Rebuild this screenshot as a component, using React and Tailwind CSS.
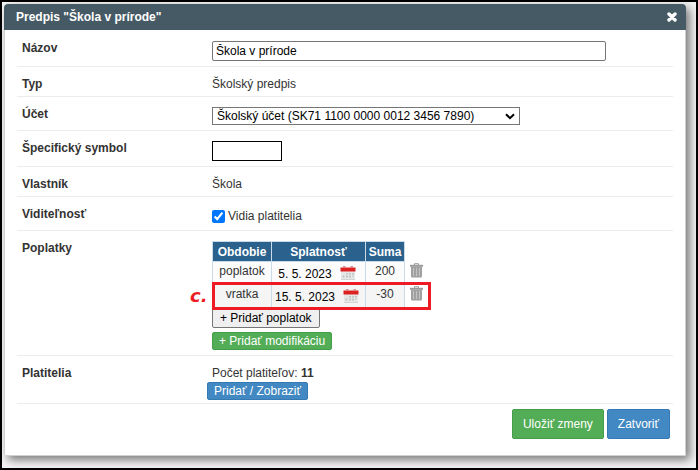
import React, { useState } from 'react';

const FEES = [
    { id: 1, period: 'poplatok', due: '5. 5. 2023',  amount: '200' },
    { id: 2, period: 'vratka',   due: '15. 5. 2023', amount: '-30' },
];

// ── Icons ────────────────────────────────────────────────────────
function CloseIcon() {
    return (
        <svg width="10" height="10" viewBox="0 0 10 10" stroke="#fff" strokeWidth="3.4" strokeLinecap="round">
            <path d="M2 2l6 6M8 2l-6 6" />
        </svg>
    );
}

function CalendarIcon() {
    return (
        <svg width="16" height="16" viewBox="0 0 16 16">
            <path d="M1 6h14v8H1z" fill="#e6e8e8" />
            <path d="M1 14h14v1H1z" fill="#d4d4d4" />
            <path d="M0.5 2.500h15v4h-15z" fill="#dd2222" />
            <path d="M3 1h2.500v2H3zM10.500 1H13v2h-2.500z" fill="#d98c8c" />
            <path
                d="M6 8h2v1.500H6zM9 8h2v1.500H9zM12 8h2v1.500h-2zM2.500 10.500h2v2h-2zM6 10.500h2v2H6zM9 10.500h2v2H9zM12 10.500h2v1h-2z"
                fill="#c2c6c6"
            />
        </svg>
    );
}

function TrashIcon() {
    return (
        <svg width="13" height="15" viewBox="0 0 13 15">
            <path d="M4.500 2V.7h4V2" fill="none" stroke="#9a9a9a" strokeWidth="1" />
            <path d="M0 1.800h13v2H0z" fill="#999" />
            <path d="M1 4h11v9.500q0 1-1 1H2q-1 0-1-1z" fill="#a0a0a0" />
            <path d="M3.500 5v8M6.500 5v8M9.500 5v8" stroke="#c4c4c4" strokeWidth="1" />
        </svg>
    );
}

// ── One label / value line of the form ───────────────────────────
function Row({ label, htmlFor, field, children }) {
    return (
        <div className="flex border-b border-[#ececec]">
            <div className="w-[195px] shrink-0 pt-2 pb-[3px] pl-[5px] font-bold">
                {htmlFor ? <label htmlFor={htmlFor}>{label}</label> : label}
            </div>
            <div className={`min-w-0 flex-1 ${field ? 'pt-[10px] pb-[5px]' : 'pt-2 pb-[3px]'}`}>
                {children}
            </div>
        </div>
    );
}

function FeeTable() {
    return (
        <div className="relative w-[219px]">
            <table className="w-full table-fixed border-collapse text-center">
                <colgroup>
                    <col className="w-[59px]" />
                    <col className="w-[94px]" />
                    <col className="w-[39px]" />
                    <col />
                </colgroup>
                <thead>
                    <tr className="h-5 text-white">
                        <th className="border border-[#c9dbe8] bg-[#2a618d] p-0">Obdobie</th>
                        <th className="border border-[#c9dbe8] bg-[#2a618d] p-0">Splatnosť</th>
                        <th className="border border-[#c9dbe8] bg-[#2a618d] p-0">Suma</th>
                        <td />
                    </tr>
                </thead>
                <tbody>
                    {FEES.map((fee) => (
                        <tr key={fee.id} className="h-[23px] bg-[#fcfcfc] even:bg-[#f5f5f5]">
                            <td className="border border-[#c9dbe8] p-0 align-top">{fee.period}</td>
                            <td className="border border-[#c9dbe8] p-0">
                                <div className="flex h-[22px] items-center justify-center gap-2 pr-[3px] text-black">
                                    <span className="pt-[2px] whitespace-nowrap">{fee.due}</span>
                                    <button type="button" aria-label="Vybrať dátum">
                                        <CalendarIcon />
                                    </button>
                                </div>
                            </td>
                            <td className="border border-[#c9dbe8] p-0 align-top">{fee.amount}</td>
                            <td className="bg-white p-0 pl-1 align-top">
                                <button type="button" aria-label="Odstrániť" className="block pt-px pl-px">
                                    <TrashIcon />
                                </button>
                            </td>
                        </tr>
                    ))}
                </tbody>
            </table>

            {/* ── Highlight around the refund line ── */}
            <div className="pointer-events-none absolute right-0 -bottom-[2px] left-0 h-7 border-3 border-[#ed1c24]" />
            <span className="absolute bottom-[3px] -left-[22px] font-['DejaVu_Sans',sans-serif] text-lg leading-[18px] font-bold text-[#ed1c24] italic">
                c.
            </span>
        </div>
    );
}

export default function App() {
    const [name, setName]       = useState('Škola v prírode');
    const [symbol, setSymbol]   = useState('');
    const [visible, setVisible] = useState(true);

    return (
        <div className="flex min-h-screen flex-col border-2 border-black bg-[#f4f4f4] pt-[2px] pr-[10px] pb-3 pl-[2px] font-['Liberation_Sans',Arial,sans-serif] text-xs leading-[18px] text-[#333]">
            <div className="flex flex-1 flex-col rounded-t-[4px] rounded-b-[2px] bg-white shadow-[4px_4px_10px_rgba(0,0,0,0.5)]">
                {/* ── Title bar ── */}
                <header className="flex h-[26px] items-center justify-between rounded-t-[4px] bg-[#465a65] pr-[9px] pl-3 text-white">
                    <h1 className="font-bold">Predpis "Škola v prírode"</h1>
                    <button type="button" aria-label="Zavrieť">
                        <CloseIcon />
                    </button>
                </header>

                <form className="flex-1 rounded-b-[2px] border border-t-0 border-[#d0d0d0] px-3 pt-px" onSubmit={(e) => e.preventDefault()}>
                    <Row label="Názov" htmlFor="name" field>
                        <input
                            id="name"
                            type="text"
                            value={name}
                            onChange={(e) => setName(e.target.value)}
                            className="block h-5 w-[394px] max-w-full rounded-[2px] border border-[#767676] px-[3px] text-black"
                        />
                    </Row>

                    <Row label="Typ">Školský predpis</Row>

                    <Row label="Účet" htmlFor="account" field>
                        <div className="relative w-[308px] max-w-full">
                            <select
                                id="account"
                                className="block h-[18px] w-full appearance-none border border-[#767676] bg-white pr-5 pl-1 leading-4 text-black"
                            >
                                <option>Školský účet (SK71 1100 0000 0012 3456 7890)</option>
                            </select>
                            <svg
                                className="pointer-events-none absolute top-[6px] right-[5px]"
                                width="10" height="7" viewBox="0 0 10 7"
                                fill="none" stroke="#000" strokeWidth="2"
                            >
                                <path d="M1 1.200l4 4 4-4" />
                            </svg>
                        </div>
                    </Row>

                    <Row label="Špecifický symbol" htmlFor="symbol" field>
                        <input
                            id="symbol"
                            type="text"
                            value={symbol}
                            onChange={(e) => setSymbol(e.target.value)}
                            className="block h-5 w-[70px] border border-black px-[3px]"
                        />
                    </Row>

                    <Row label="Vlastník">Škola</Row>

                    <Row label="Viditeľnosť" field>
                        <label className="flex items-center gap-[3px]">
                            <input
                                type="checkbox"
                                checked={visible}
                                onChange={(e) => setVisible(e.target.checked)}
                                className="size-[13px] accent-[#0075ff]"
                            />
                            Vidia platitelia
                        </label>
                    </Row>

                    <Row label="Poplatky" field>
                        <FeeTable />
                        <button
                            type="button"
                            className="block h-5 rounded-[2px] border border-[#767676] bg-[#efefef] px-[7px] leading-4 text-black"
                        >
                            + Pridať poplatok
                        </button>
                        <button
                            type="button"
                            className="mt-1 block h-[18px] rounded-[2px] border border-[#449d48] bg-[#53ad57] px-[6px] leading-4 text-white"
                        >
                            + Pridať modifikáciu
                        </button>
                    </Row>

                    <Row label="Platitelia">
                        <p>Počet platiteľov: <b>11</b></p>
                        <button
                            type="button"
                            className="-ml-[5px] block h-[18px] rounded-[2px] border border-[#3579b3] bg-[#4288c2] px-[6px] leading-4 text-white"
                        >
                            Pridať / Zobraziť
                        </button>
                    </Row>

                    {/* ── Footer buttons ── */}
                    <div className="flex justify-end gap-[3px] pt-[5px] pr-[3px] pb-4">
                        <button
                            type="submit"
                            className="h-[30px] rounded-[2px] border border-[#449d48] bg-[#53ad57] px-[10px] text-white"
                        >
                            Uložiť zmeny
                        </button>
                        <button
                            type="button"
                            className="h-[30px] rounded-[2px] border border-[#3579b3] bg-[#4288c2] px-[10px] text-white"
                        >
                            Zatvoriť
                        </button>
                    </div>
                </form>
            </div>
        </div>
    );
}
